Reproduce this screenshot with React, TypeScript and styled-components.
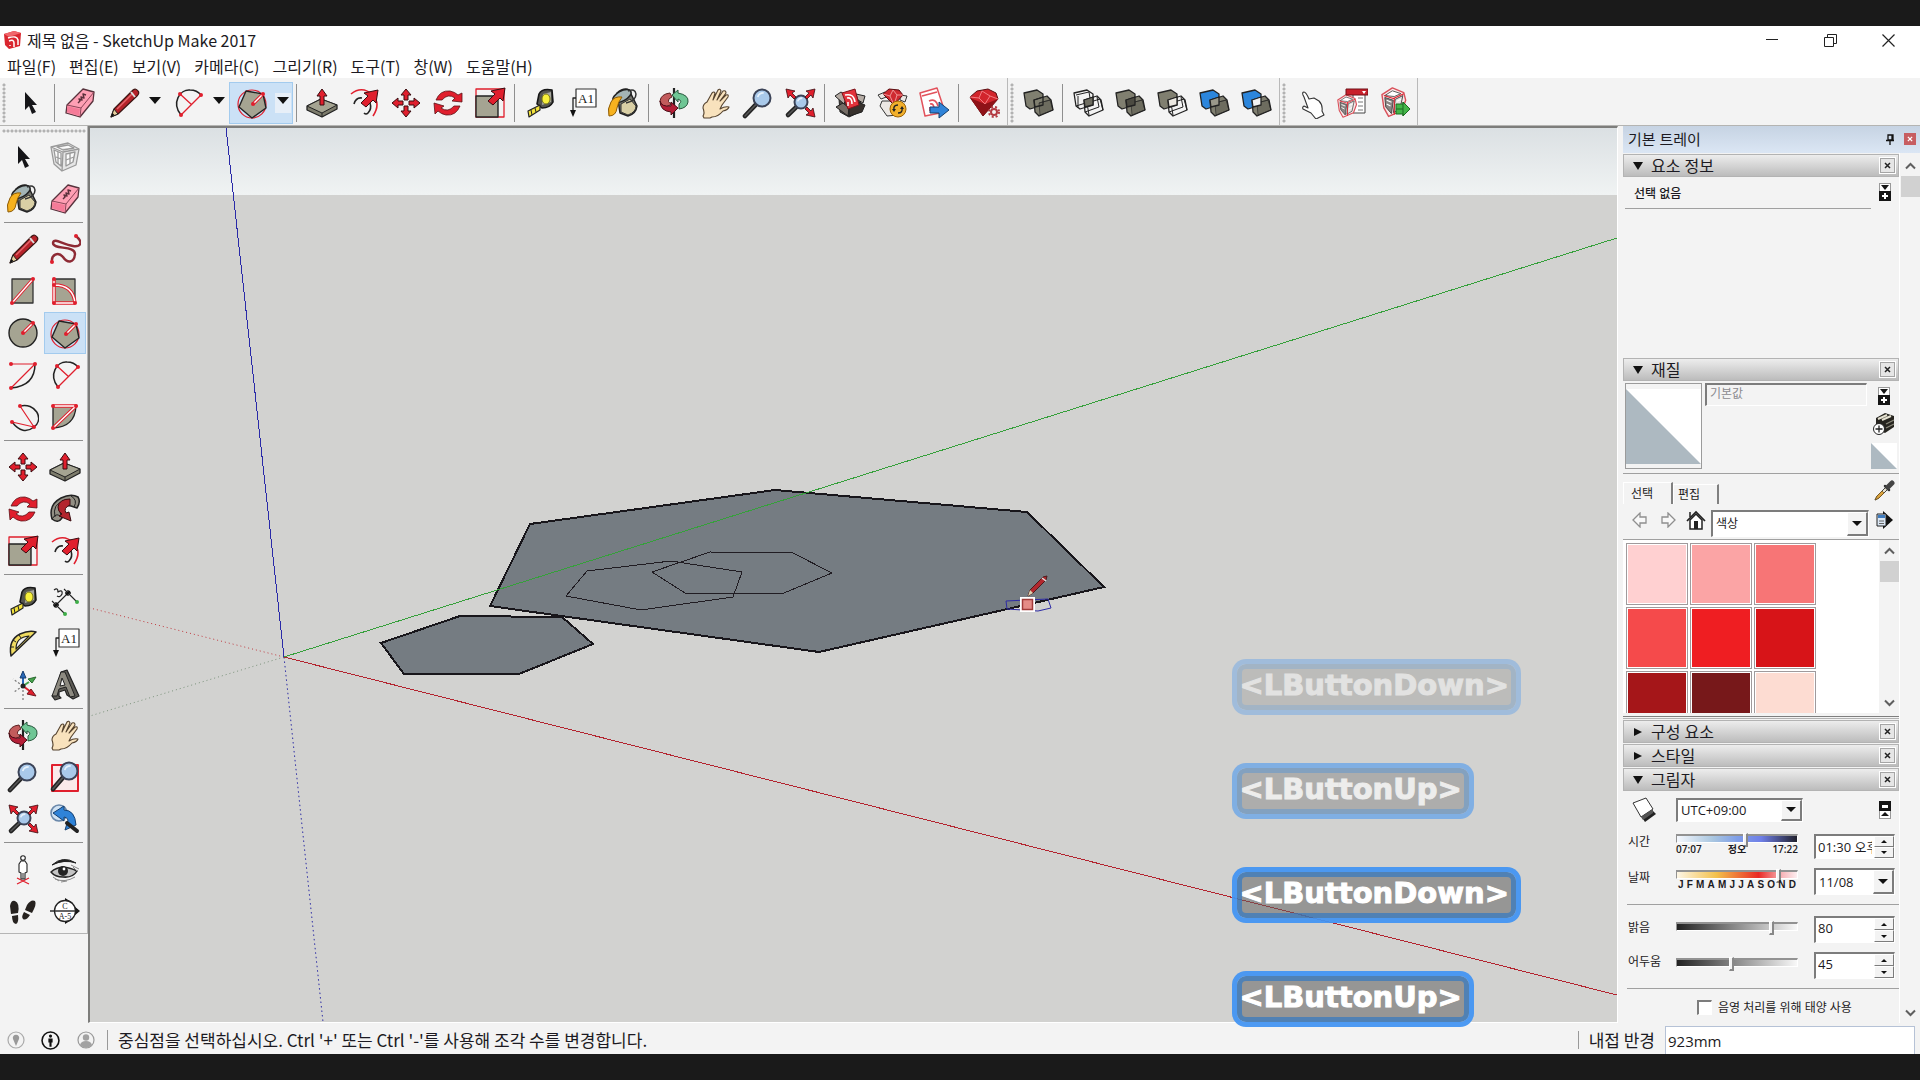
import React, { useState } from "react";
import styled, { createGlobalStyle, css } from "styled-components";

const uiFont = `"Open Sans", "Noto Sans CJK KR", sans-serif`;
const koFont = `"Noto Sans CJK KR", "Open Sans", sans-serif`;
const ink = "#1c1a22";
const face = "#f3f3f3";
const red = "#e01f2d";
const stone = "#a5a492";

const GlobalStyle = createGlobalStyle`
  * { box-sizing: border-box; }
  html, body { margin: 0; height: 100%; }
  #root { height: 100%; }
  button, input, select { font: inherit; color: inherit; margin: 0; }
`;

/* ---------- icons ---------- */

const Svg = ({ size = 32, children }: { size?: number; children: React.ReactNode }) => (
  <svg width={size} height={size} viewBox="0 0 32 32" fill="none" strokeLinejoin="round" aria-hidden="true">
    {children}
  </svg>
);

const Dots = ({ at }: { at: number[][] }) => (
  <>{at.map(([x, y]) => <circle key={`${x}-${y}`} cx={x} cy={y} r="2" fill={red} />)}</>
);

const Cased = ({ d }: { d: string }) => (
  <>
    <path d={d} stroke={red} strokeWidth="3.4" />
    <path d={d} stroke="#fff" strokeWidth="1.4" />
  </>
);

const Lens = ({ x = 20, y = 11, r = 8.5, hx = 3, hy = 29 }) => (
  <>
    <path d={`M${x - r * 0.7} ${y + r * 0.75}L${hx} ${hy}`} stroke="#222" strokeWidth="4.6" strokeLinecap="round" />
    <path d={`M${x - r * 0.7} ${y + r * 0.75}L${hx} ${hy}`} stroke="#555" strokeWidth="1.6" strokeLinecap="round" />
    <circle cx={x} cy={y} r={r} fill="#a9c9ea" stroke="#3b4357" strokeWidth="2" />
    <path d={`M${x - r * 0.5} ${y - r * 0.1}Q${x - r * 0.4} ${y - r * 0.6} ${x + r * 0.2} ${y - r * 0.6}`} stroke="#e6f1fb" strokeWidth="1.6" />
  </>
);

const diagArrow = "M31 1L29 14L26 11L19 18L14 14L21 7L17 4Z";
const cornerArrow = "M2 2L11 4L8 6L12 10L10 12L6 8L4 11Z";

const Solid = ({ a = "#807f70", b = "#807f70", mid = "none", wireA = false, wireB = false }) => (
  <>
    <path d="M2 6L15 3L21 7V18L8 22L4 19Z" fill={wireA ? "none" : a} stroke="#222" strokeWidth="1.3" />
    {wireA && <path d="M4 8L17 5M6 21V9M17 5L19 17M4 19L17 15L21 18" stroke="#222" />}
    <path d="M12 13L25 9L29 13L31 23L17 29L13 25Z" fill={wireB ? "none" : b} stroke="#222" strokeWidth="1.3" />
    {!wireB && <path d="M17 16L28 13M17 16L18 28L31 23L28 13Z" fill="#000" fillOpacity=".15" stroke="#222" strokeWidth=".6" />}
    {wireB && <path d="M15 16L28 12L31 23M15 16L17 28M13 25L27 20L25 10" stroke="#222" />}
    <path d="M12 13L21 10V18L13 20Z" fill={mid} stroke="#222" strokeWidth="1.3" />
  </>
);

const Box = () => (
  <>
    <path d="M5 12L13 17L27 11L26 25L15 30L6 25Z" fill="#4a443f" stroke="#222" />
    <path d="M1 9L7 5L13 9L10 17Z" fill="#b5aca5" stroke="#222" />
    <path d="M22 7L31 9L29 16L24 13Z" fill="#b5aca5" stroke="#222" />
    <path d="M2 20L9 16L15 21L14 29Z" fill="#756d66" stroke="#222" />
    <path d="M31 18L24 15L15 21L15 29L28 25Z" fill="#37312d" stroke="#222" />
  </>
);

const House = () => (
  <>
    <path d="M1 8L12 1L24 6L26 14L22 25L8 31L3 22Z" fill="#fbe9e9" stroke="#d9505a" strokeWidth="1.5" />
    <path d="M4 9L12 4L21 7L14 10Z" fill="#fff" stroke="#555" />
    <path d="M4 11L13 14L11 28L5 21Z" fill="#8a8583" stroke="#444" />
    <path d="M15 13L23 9L20 23L13 27Z" fill="#e6e2e0" stroke="#444" />
    <path d="M6 14L11 16M6 18L10 20M17 15L21 13M16 20L20 18" stroke="#fff" strokeWidth="1.2" />
    <path d="M14 11V29M3 9L13 12L24 7" stroke={red} strokeWidth="1.1" />
  </>
);

const icons: Record<string, React.ReactNode> = {
  select: <path d="M11 5V23L15 19L18 27L22 25L18 18H23Z" fill="#151518" />,
  component: (
    <g stroke="#9a9a9a" strokeWidth="1.3">
      <path d="M2 6L19 2L30 8L27 24L13 30L5 23Z" fill="#e6e6e6" />
      <path d="M2 6L14 11L30 8M14 11L13 30M5 9L12 12L12 25L7 21ZM17 13L26 11L24 21L17 25ZM8 6L19 4L25 7L14 9Z" fill="#fbfbfb" />
      <path d="M7 16L12 18M17 19L25 16M9 11V23M21 12V23" />
    </g>
  ),
  bucket: (
    <>
      <path d="M9 6Q16 0 21 3L29 19Q28 27 20 29L12 26Z" fill="#77776f" stroke="#222" strokeWidth="1.5" />
      <path d="M13 17L22 12L28 19Q28 25 20 28L13 25Z" fill="#d9cfa5" stroke="#333" />
      <ellipse cx="14" cy="9" rx="10" ry="5" transform="rotate(-28 14 9)" fill="#a3b4b5" stroke="#222" strokeWidth="1.5" />
      <path d="M20 4Q27 1 28 7Q28 14 18 16" stroke="#333" strokeWidth="1.5" />
      <path d="M14 10Q6 9 3 15Q-1 22 1 29Q8 29 9 21Q10 15 14 10Z" fill="#f7b21f" stroke="#8c5b08" />
    </>
  ),
  eraser: (
    <>
      <path d="M19 2L30 5L29 14L16 30L2 26L3 18Z" fill="#ff9fb4" stroke="#57323c" strokeWidth="1.3" />
      <path d="M3 18L17 21L30 5M17 21L16 30" stroke="#8d4659" />
      <path d="M3 19L16 22L15 29L3 25Z" fill="#f57b98" />
      <path d="M14 16L16 14L15 12L18 13L17 10L20 11L19 7L22 8" stroke="#5b2f3a" strokeWidth="1.4" />
    </>
  ),
  pencil: (
    <>
      <path d="M3 30L6 22L25 3Q28 1 30 4Q32 6 29 9L10 27Z" fill="#b52229" stroke="#3c1512" strokeWidth="1.2" />
      <path d="M3 30L6 22L10 27Z" fill="#e8cf9d" stroke="#222" />
      <path d="M3 30L4.500 26L6.500 28Z" fill="#111" />
      <path d="M9 22L25 6" stroke="#e5656a" strokeWidth="1.5" />
      <path d="M23 5L27 10" stroke="#ddd" strokeWidth="2" />
    </>
  ),
  freehand: (
    <>
      <path d="M27 3C35 10 31 14 24 13C14 12 5 4 4 10C4 17 26 12 26 21C25 31 18 30 14 24C9 18 2 22 3 29" stroke="#8e2a34" strokeWidth="2.400" />
      <Dots at={[[27, 3], [3, 29]]} />
    </>
  ),
  rectangle: (
    <>
      <path d="M5 4H26V28H5Z" fill={stone} stroke="#333" strokeWidth="1.3" />
      <Cased d="M5 28L26 4" />
      <Dots at={[[5, 28], [26, 4]]} />
    </>
  ),
  rotatedRect: (
    <>
      <path d="M5 4H26V28H5Z" fill={stone} stroke="#333" strokeWidth="1.3" />
      <Cased d="M5 4V28H26M5 10Q24 10 26 28" />
      <Dots at={[[5, 4], [5, 10], [5, 28], [26, 28]]} />
    </>
  ),
  circle: (
    <>
      <circle cx="16" cy="16" r="14" fill={stone} stroke="#222" strokeWidth="1.4" />
      <Cased d="M16 16L26 6" />
      <Dots at={[[16, 16], [26, 6]]} />
    </>
  ),
  polygon: (
    <>
      <circle cx="16" cy="17" r="14" stroke={red} strokeWidth="1.2" />
      <path d="M10 4L27 7L30 21L16 31L3 20Z" fill={stone} stroke="#222" strokeWidth="1.4" />
      <Cased d="M17 17L27 7" />
      <Dots at={[[17, 17], [27, 7]]} />
    </>
  ),
  arc: (
    <>
      <path d="M4 29Q28 27 28 5" stroke="#222" strokeWidth="1.5" />
      <path d="M4 5H28L4 29" stroke={red} strokeWidth="1.2" />
      <Dots at={[[4, 5], [28, 5], [4, 29]]} />
    </>
  ),
  arc2: (
    <>
      <path d="M9 28C-1 16 8 2 18 3Q25 3 29 8" stroke="#222" strokeWidth="1.5" />
      <path d="M8 7L20 18M29 8L9 28" stroke={red} strokeWidth="1.3" />
      <Dots at={[[8, 7], [29, 8], [9, 28]]} />
    </>
  ),
  arc3: (
    <>
      <path d="M13 5C28 1 38 18 27 26Q16 35 5 21" stroke="#222" strokeWidth="1.5" />
      <path d="M13 5L27 26L5 21" stroke={red} strokeWidth="1.2" />
      <Dots at={[[13, 5], [5, 21], [27, 26]]} />
    </>
  ),
  pie: (
    <>
      <path d="M4 5H27Q26 26 4 27Z" fill={stone} stroke="#222" strokeWidth="1.3" />
      <Cased d="M4 5H27L4 27" />
      <Dots at={[[4, 5], [27, 5], [4, 27]]} />
    </>
  ),
  move: (
    <g fill={red} stroke="#3a0c10" strokeWidth="1">
      {[0, 90, 180, 270].map((a) => (
        <path key={a} transform={`rotate(${a} 16 16)`} d="M16 2L21 8H18V13H14V8H11Z" />
      ))}
    </g>
  ),
  pushpull: (
    <>
      <path d="M1 19L15 12L31 18V22L16 30L1 23Z" fill="#7d7c6c" stroke="#222" strokeWidth="1.3" />
      <path d="M1 19L15 12L31 18L16 26Z" fill={stone} stroke="#222" />
      <path d="M16 26V30" stroke="#222" />
      <path d="M16 2L21 9H18V18H14V9H11Z" fill={red} stroke="#3a0c10" />
    </>
  ),
  rotate: (
    <g fill={red} stroke="#5c1217" strokeWidth=".8">
      <path d="M4 13Q8 3 18 4Q23 5 26 8L30 6V15L20 14L23 11Q16 6 10 13Z" />
      <path d="M28 19Q24 29 14 28Q9 27 6 24L3 27L2 16L12 19L9 21Q16 26 22 19Z" />
    </g>
  ),
  follow: (
    <>
      <path d="M3 26Q-1 12 12 5Q22 0 29 4Q32 9 28 15L22 13Q14 11 11 18L13 25Q9 31 3 26Z" fill="#928f84" stroke="#222" strokeWidth="1.5" />
      <path d="M6 24Q3 11 15 8M22 3Q29 7 25 14M3 26Q8 18 13 25" stroke="#222" />
      <path d="M21 6Q10 6 9 14Q9 19 13 21L10 23L22 28L20 19L17 20Q14 15 21 12Z" fill="#b3242d" stroke="#3a0c10" />
    </>
  ),
  scale: (
    <>
      <path d="M2 2H30V30H2Z" stroke={red} strokeWidth="1.3" />
      <path d="M2 9H24V30H2Z" fill={stone} stroke="#222" strokeWidth="1.4" />
      <path d={diagArrow} fill={red} stroke="#3a0c10" />
    </>
  ),
  offset: (
    <>
      <path d="M3 7Q14 -2 25 8Q33 17 25 29" stroke={red} strokeWidth="1.6" />
      <path d="M6 17Q8 10 14 11M22 16Q24 22 20 26Q18 28 16 26" stroke="#222" strokeWidth="1.6" />
      <path d={diagArrow} transform="translate(-1 2)" fill={red} stroke="#3a0c10" />
    </>
  ),
  tape: (
    <>
      <path d="M15 7Q18 1 28 3L29 15Q26 21 18 21L13 17Z" fill="#55554f" stroke="#161616" strokeWidth="1.6" />
      <path d="M19 7L27 5L27 15L18 18Z" fill="#a7a7a0" />
      <ellipse cx="22" cy="12" rx="4" ry="5" fill="#f8f03c" stroke="#7b7614" />
      <path d="M16 18L4 24L5 30L16 23Z" fill="#f2e23b" stroke="#222" strokeWidth="1.2" />
      <path d="M7 23L8 28M11 21L12 25" stroke="#222" />
    </>
  ),
  dimension: (
    <>
      <path d="M7 20L19 8M3 16L16 29M15 4L28 17" stroke="#222" strokeWidth="1.1" />
      <path d="M4 20H10M7 17V23M16 8H22M19 5V11M5 22L9 18M17 10L21 6" stroke="#111" strokeWidth="1.3" />
      <circle cx="16" cy="29" r="2" fill="#3fae49" />
      <circle cx="28" cy="17" r="2" fill="#3fae49" />
      <path d="M5 5Q9 2 9 7Q14 4 13 9Q11 13 8 11" stroke="#222" strokeWidth="1.3" />
    </>
  ),
  protractor: (
    <>
      <path d="M4 29Q1 13 13 7Q22 3 29 5Z" fill="#f0dc62" stroke="#222" strokeWidth="1.5" />
      <path d="M9 22Q9 10 22 9Z" fill={face} stroke="#222" strokeWidth="1.2" />
      <path d="M4 20L7 20M6 13L9 15M12 8L14 11" stroke="#222" />
    </>
  ),
  text: (
    <>
      <path d="M10 2H30V20H10Z" fill="#fff" stroke="#333" strokeWidth="1.2" />
      <path d="M10 11H7V24" stroke="#222" strokeWidth="1.3" />
      <path d="M4 23H10L7 30Z" fill="#111" />
      <text x="20" y="16" textAnchor="middle" fontSize="13" fontFamily="Liberation Serif, serif" fill="#222">A1</text>
    </>
  ),
  axes: (
    <>
      <path d="M16 17L6 10M16 17L7 23M16 17V31" stroke="#777" strokeWidth="1.2" strokeDasharray="2 2" />
      <path d="M16 17V8" stroke="#2767b8" strokeWidth="2" />
      <path d="M16 17L22 13" stroke="#46a34c" strokeWidth="2" />
      <path d="M16 17L24 23" stroke={red} strokeWidth="2" />
      <path d="M16 2L19 9H13Z" fill="#2767b8" stroke="#173e70" />
      <path d="M29 8L25 14L21 10Z" fill="#46a34c" stroke="#2a6930" />
      <path d="M29 27L20 25L24 20Z" fill={red} stroke="#701820" />
      <circle cx="16" cy="17" r="2.500" fill="#222" />
    </>
  ),
  text3d: (
    <>
      <path d="M12 3L18 1L30 27L24 30L18 26L16 21L10 23V27L12 29L6 31L3 27L7 25Z" fill="#5d5b55" stroke="#222" strokeWidth="1.2" />
      <path d="M12 3L16 3L26 27L21 28L17 18L10 20L8 27L3 27Z" fill="#8d8a80" stroke="#222" />
      <path d="M13 9L16 16L11 17Z" fill={face} stroke="#222" />
    </>
  ),
  orbit: (
    <>
      <path d="M16 1V31" stroke="#222" strokeWidth="2.200" />
      <path d="M12 6Q3 7 2 14Q2 18 8 20L14 17Q8 15 12 11L14 10Z" fill="#c25b5c" stroke="#5c1e1e" />
      <path d="M14 8L20 3V6Q31 8 30 15Q29 21 21 22V17Q25 14 20 12V15Z" fill="#6fc695" stroke="#27573c" />
      <path d="M2 14Q3 20 13 19V15L20 21L13 28V25Q2 24 2 14Z" fill="#b41f37" stroke="#4c0d17" />
    </>
  ),
  pan: (
    <path d="M3 29Q5 26 3 21Q3 17 7 15L12 6Q14 4 15 6L13 13L18 3Q20 1 21 4L17 13L23 4Q26 3 26 6L20 14L26 8Q29 7 28 10L22 18L20 22Q25 19 29 20Q28 23 23 24Q18 30 12 30L10 31H4Z" fill="#f8e2bd" stroke="#54422e" strokeWidth="1.100" />
  ),
  zoom: <Lens />,
  zoomWindow: (
    <>
      <path d="M3 4H29V30H3Z" fill="#fbeaea" stroke={red} strokeWidth="2" />
      <Lens x={20} y={10} r={8.5} hx={4} hy={28} />
    </>
  ),
  extents: (
    <>
      <Lens x={17} y={15} r={6.5} hx={4} hy={28} />
      <g fill={red} stroke="#3a0c10" strokeWidth=".8">
        <path d={cornerArrow} />
        <path transform="matrix(-1 0 0 1 33 0)" d={cornerArrow} />
        <path transform="rotate(180 16.500 16)" d={cornerArrow} />
      </g>
    </>
  ),
  previous: (
    <>
      <circle cx="10" cy="10" r="8" fill="#cfe2f3" stroke="#6a88aa" strokeWidth="1.6" />
      <path d="M4 10L15 3V7Q26 7 27 22L16 27L19 17Q18 14 15 14V18Z" fill="#2f83d8" stroke="#16406f" />
      <path d="M18 20L28 28" stroke="#222" strokeWidth="4" strokeLinecap="round" />
    </>
  ),
  camera: (
    <>
      <path d="M10 31L22 25M22 31L10 25" stroke={red} strokeWidth="1.3" />
      <circle cx="16" cy="5" r="2.300" fill="#fff" stroke="#222" strokeWidth="1.100" />
      <path d="M14 8H18L20 11L20 19L18 20V26H14V20L12 19L12 11Z" fill="#fff" stroke="#222" strokeWidth="1.1" />
      <path d="M16 20V26" stroke="#222" />
    </>
  ),
  eye: (
    <>
      <path d="M2 19Q12 10 28 18Q24 25 14 24Q6 24 2 19Z" fill="#c4c4c4" stroke="#222" strokeWidth="1.5" />
      <path d="M3 12Q14 2 27 10Q15 6 3 12Z" fill="#222" stroke="#222" />
      <circle cx="14" cy="18" r="5" fill="#222" />
      <circle cx="15" cy="16" r="1.400" fill="#fff" />
      <path d="M6 26Q16 30 26 24M22 12L30 16M12 29L18 28M24 14L29 19M4 24L10 28" stroke="#888" />
    </>
  ),
  feet: (
    <>
      <path d="M3 11Q4 5 8 6Q13 8 11 18L4 19Z" fill="#26221f" />
      <path d="M5 21L11 20Q12 28 9 29Q5 28 5 21Z" fill="#26221f" />
      <path d="M20 10Q24 4 28 6Q30 9 25 18L18 15Z" fill="#26221f" />
      <path d="M17 17L23 20Q19 26 16 24Q14 22 17 17Z" fill="#26221f" />
    </>
  ),
  section: (
    <>
      <path d="M16 3L24 8H16ZM16 29L24 24H16ZM25 11L31 16L25 21Z" fill="#111" />
      <circle cx="16" cy="16" r="10.500" fill="#fff" stroke="#222" strokeWidth="1.3" />
      <path d="M1 16H30" stroke="#222" strokeWidth="1.4" />
      <text x="16" y="14" textAnchor="middle" fontSize="8" fontFamily="Liberation Serif, serif" fill="#222">C</text>
      <text x="16" y="24" textAnchor="middle" fontSize="8" fontFamily="Liberation Serif, serif" fill="#222">A-5</text>
    </>
  ),
  warehouse: (
    <>
      <Box />
      <path d="M8 6L21 2L25 18L14 22Z" fill="#e2323b" stroke="#7d1219" />
      <path d="M11 8Q20 6 21 15M13 11Q18 10 18 17M14 15V19" stroke="#fff" strokeWidth="1.5" />
    </>
  ),
  extension: (
    <>
      <path d="M5 12L2 8L9 5L13 9ZM24 8L31 9L29 15L24 13ZM4 19L11 29L22 28V14H6Z" fill="#ece8e4" stroke="#333" />
      <path d="M7 7L13 2L23 3L27 8L18 18Z" fill="#cf2a30" stroke="#5a0d11" />
      <path d="M7 7L14 9L18 18L21 8L27 8M14 9L17 3L21 8" stroke="#f2a0a2" strokeWidth=".9" />
      <circle cx="22" cy="22" r="8" fill="#f2b02c" stroke="#9a6204" />
      <path d="M18 23Q17 18 22 18M26 21Q27 26 22 26" stroke="#222" strokeWidth="1.4" />
      <path d="M16 22H20L18 25ZM24 22H28L26 19Z" fill="#222" />
    </>
  ),
  layout: (
    <>
      <path d="M2 6L19 1L27 25L7 29Z" fill="#fff" stroke="#e2525c" strokeWidth="1.5" />
      <path d="M4 9L19 5M11 14Q18 11 20 19M12 17Q16 16 16 22M12 20V24" stroke="#e2525c" strokeWidth="1.7" />
      <path d="M12 20H21V15L31 23L21 31V26H12Z" fill="#2f83d8" stroke="#163f6d" />
    </>
  ),
  ruby: (
    <>
      <path d="M2 10L9 4L20 2L28 6L30 12L15 29Z" fill="#d2252c" stroke="#5a0d11" />
      <path d="M2 11L15 29L30 12L17 17Z" fill="#8f1218" />
      <path d="M2 10L11 11L17 17L22 9L30 12M11 11L14 4L22 9" stroke="#f27b80" />
      <circle cx="26" cy="25" r="3" fill={face} stroke="#b33a42" strokeWidth="2" />
      <circle cx="26" cy="25" r="5" stroke="#b33a42" strokeWidth="2" strokeDasharray="2 2" />
    </>
  ),
  outerShell: <Solid />,
  intersect: <Solid wireA wireB mid="#6f6e62" />,
  union: <Solid mid="#4c4b42" />,
  subtract: <Solid wireB mid="#ece9e2" />,
  trim: <Solid a="#2c86dc" mid="#9a988a" />,
  split: <Solid a="#2c86dc" mid="#f3f3f3" />,
  pointer: (
    <path d="M9 8Q8 5 10 5Q12 5 15 12L20 11L25 14Q29 18 28 24L30 28L22 32L17 26L9 22Q8 20 10 19L14 21L10 10Z" fill="#fff" stroke="#333" strokeWidth="1.1" />
  ),
  houseList: (
    <>
      <path d="M17 6H29V26H17Z" fill="#fff" stroke="#444" />
      <path d="M22 11H27M22 15H27M22 19H27M22 23H27" stroke="#777" />
      <g transform="translate(1 7) scale(.75)"><House /></g>
      <path d="M10 2H32V8H10Z" fill="#c9202b" stroke="#6e1018" />
      <path d="M26 4H30L28 7Z" fill="#fff" />
    </>
  ),
  houseGo: (
    <>
      <g transform="translate(3 0) scale(.95)"><House /></g>
      <path d="M18 17H25V15L32 22L25 29V27H18Z" fill="#43b649" stroke="#1d6a22" />
      <path d="M18 22H25M25 15V29" stroke="#1d6a22" />
    </>
  ),
};

/* ---------- window frame ---------- */

const Screen = styled.div`
  display: flex;
  flex-direction: column;
  height: 100vh;
  min-height: 720px;
  padding: 26px 0;
  overflow: hidden;
  background: #1a1a1a;
  color: ${ink};
  font: 15px/20px ${uiFont};
`;

const AppWindow = styled.div`
  flex: 1;
  min-height: 0;
  display: flex;
  flex-direction: column;
  background: ${face};
`;

const TitleBar = styled.header`
  display: flex;
  align-items: center;
  height: 28px;
  padding: 0 3px;
  background: #fff;
`;

const Title = styled.h1`
  flex: 1;
  margin: 0;
  padding-left: 4px;
  font: 400 16px/20px ${koFont};
`;

const WindowButton = styled.button`
  width: 58px;
  height: 28px;
  border: 0;
  padding: 0;
  background: none;
  display: grid;
  place-items: center;
`;

const MenuBar = styled.nav`
  display: flex;
  height: 24px;
  background: #fff;
`;

const MenuItem = styled.button`
  border: 0;
  padding: 0 6px 0 7px;
  background: none;
  font: 16px/24px ${koFont};
`;

const Toolbar = styled.div`
  display: flex;
  height: 48px;
  border-bottom: 1px solid #b4b4b2;
`;

const ToolGroup = styled.div`
  display: flex;
  align-items: center;
  padding: 2px 2px 0 0;
  border-right: 1px solid #b9b9b9;
`;

const Grip = styled.span`
  width: 9px;
  height: 40px;
  background: radial-gradient(circle at 4px 2px, #b2b2b2 1px, transparent 2px) 0 0 / 9px 4px;
`;

const ToolButton = styled.button<{ $active?: boolean; $wide?: boolean }>`
  display: grid;
  place-items: center;
  width: ${(p) => (p.$wide ? 46 : 42)}px;
  height: 42px;
  padding: 0;
  border: 1px solid ${(p) => (p.$active ? "#a3cbee" : "transparent")};
  background: ${(p) => (p.$active ? "#cbe1f6" : "none")};
`;

const SplitTool = styled.span<{ $active?: boolean }>`
  display: flex;
  width: 64px;
  height: 42px;
  outline: ${(p) => (p.$active ? "1px solid #a3cbee" : "none")};
  outline-offset: -1px;
  background: ${(p) => (p.$active ? "#cbe1f6" : "none")};
`;

const DropArrow = styled.button<{ $active?: boolean }>`
  width: 16px;
  height: 20px;
  align-self: center;
  padding: 0 0 4px;
  border: 0;
  display: grid;
  place-items: center;
  background: ${(p) => (p.$active ? "#e7eff8" : "none")};
`;

const Triangle = styled.span<{ $dir?: "up" | "down" | "right"; $size?: number; $depth?: number }>`
  width: 0;
  height: 0;
  border: ${(p) => p.$size ?? 5}px solid transparent;
  ${(p) =>
    p.$dir === "up"
      ? css`border-bottom: ${p.$depth ?? p.$size ?? 5}px solid #111; border-top-width: 0;`
      : p.$dir === "right"
      ? css`border-left: ${p.$depth ?? 8}px solid #111; border-right-width: 0;`
      : css`border-top: ${p.$depth ?? p.$size ?? 5}px solid #111; border-bottom-width: 0;`}
`;

const ToolDivider = styled.hr`
  width: 1px;
  height: 38px;
  margin: 0 4px 0 3px;
  border: 0;
  background: #8f8f8f;
`;

/* ---------- workspace ---------- */

const Workspace = styled.main`
  flex: 1;
  min-height: 0;
  display: grid;
  grid-template-columns: 88px minmax(0, 1fr) 302px;
`;

const Palette = styled.aside`
  align-self: start;
  padding: 0 1px 1px 2px;
  border-right: 1px solid #b5b5b5;
  border-bottom: 1px solid #b5b5b5;
`;

const PaletteGrip = styled.div`
  height: 10px;
  background: radial-gradient(circle at 2px 5px, #b2b2b2 1px, transparent 2px) 0 0 / 4px 10px;
`;

const PaletteGroup = styled.div`
  display: grid;
  grid-template-columns: 42px 42px;
`;

const PaletteRule = styled.hr`
  height: 1px;
  margin: 2px 3px 5px 2px;
  border: 0;
  background: #8f8f8f;
`;

const Viewport = styled.section`
  position: relative;
  border: solid;
  border-width: 2px 1px 1px 2px;
  border-color: #7d7d7b #fff #fff #7d7d7b;
  background: #d2d2d0;
`;

const Scene = styled.svg`
  display: block;
  width: 100%;
  height: 100%;
  position: absolute;
  inset: 0;
`;

const KeyStack = styled.div`
  position: absolute;
  right: 96px;
  bottom: -5px;
  z-index: 2;
  display: flex;
  flex-direction: column;
  align-items: flex-start;
  gap: 48px;
`;

const KeyBadge = styled.span<{ $fade: number }>`
  height: 56px;
  padding: 0 7px 0 2px;
  border: 5px solid rgba(66, 148, 242, 0.94);
  border-radius: 14px;
  background: rgba(96, 96, 96, 0.52) padding-box;
  box-shadow: inset 0 0 0 5px rgba(56, 122, 190, 0.75);
  opacity: ${(p) => p.$fade};
  color: #fff;
  font: 700 29px/42px "DejaVu Sans", sans-serif;
  -webkit-text-stroke: 1px #fff;
`;

/* ---------- tray ---------- */

const Tray = styled.aside`
  min-height: 0;
  margin-left: 5px;
  display: flex;
  flex-direction: column;
  font-size: 12px;
  line-height: 16px;
`;

const TrayTitle = styled.div`
  display: flex;
  align-items: center;
  gap: 8px;
  flex: none;
  height: 27px;
  padding: 0 4px 1px 5px;
  background: linear-gradient(#c6d3e3, #dbe6f4);
  h2 {
    flex: 1;
    margin: 0;
    font-size: 15px;
    font-weight: 400;
  }
`;

const PinButton = styled.button`
  border: 0;
  padding: 0;
  width: 12px;
  height: 12px;
  background: none;
  display: grid;
`;

const TrayClose = styled(PinButton)`
  background: #c75d61;
  place-items: center;
`;

const TrayBody = styled.div`
  flex: 1;
  min-height: 0;
  display: grid;
  grid-template-columns: minmax(0, 1fr) 20px;
  overflow: hidden;
`;

const Sections = styled.div`
  min-height: 0;
  padding-top: 1px;
  border-right: 1px solid #fff;
  overflow: hidden;
`;

const SectionHead = styled.div`
  display: flex;
  align-items: center;
  gap: 8px;
  height: 23px;
  margin-bottom: 1px;
  padding: 0 2px 0 9px;
  border: 1px solid #b3b3b3;
  background: linear-gradient(#ededed, #bcbcbc);
  h3 {
    flex: 1;
    margin: 0;
    font-size: 16px;
    line-height: 20px;
    font-weight: 400;
  }
`;

const CaretBox = styled.span`
  width: 10px;
  display: grid;
  place-items: center;
`;

const HeadClose = styled.button`
  width: 17px;
  height: 17px;
  padding: 0;
  border: 1px solid #fff;
  outline: 1px solid #a5a5a5;
  outline-offset: -2px;
  background: #e6e6e6;
  display: grid;
  place-items: center;
`;

const InfoBody = styled.div`
  display: flex;
  justify-content: space-between;
  align-items: flex-start;
  height: 180px;
  padding: 5px 8px 0 2px;
`;

const InfoText = styled.p`
  width: 246px;
  height: 26px;
  margin: 0;
  padding: 3px 9px;
  border-bottom: 1px solid #a0a0a0;
  font-weight: 500;
`;

const ToggleButton = styled.button`
  width: 12px;
  height: 18px;
  padding: 0;
  border: 0;
  background: none;
  display: grid;
`;

const MaterialTop = styled.div`
  display: grid;
  grid-template-columns: 77px 162px 1fr;
  column-gap: 3px;
  height: 92px;
  padding: 1px 2px 4px 2px;
  border-bottom: 1px solid #a0a0a0;
`;

const Preview = styled.div`
  height: 86px;
  padding-top: 5px;
  border: 1px solid #9b9b9b;
  svg { display: block; }
`;

const sunken = css`
  border: solid;
  border-width: 2px 1px 1px 2px;
  border-color: #7c7c7c #fff #fff #7c7c7c;
`;

const NameField = styled.input`
  ${sunken}
  width: 100%;
  height: 23px;
  padding: 0 3px 3px;
  background: ${face};
  &::placeholder { color: #8b8b90; opacity: 1; }
`;

const SideIcons = styled.div`
  justify-self: end;
  width: 26px;
  display: flex;
  flex-direction: column;
  align-items: center;
  justify-content: space-between;
  padding-top: 4px;
`;

const IconButton = styled.button<{ $w?: number }>`
  width: ${(p) => p.$w ?? 24}px;
  height: 26px;
  padding: 0;
  border: 0;
  background: none;
  display: grid;
  place-items: center;
`;

const TabRow = styled.div`
  display: flex;
  align-items: flex-end;
  height: 30px;
  padding-right: 3px;
  ${IconButton} { margin-left: auto; }
`;

const Tab = styled.button<{ $active?: boolean }>`
  width: ${(p) => (p.$active ? 50 : 46)}px;
  height: ${(p) => (p.$active ? 22 : 20)}px;
  padding: 0 0 0 ${(p) => (p.$active ? 7 : 4)}px;
  border: solid;
  border-width: 1px 2px 0 1px;
  border-color: #fff #808080 #fff #fff;
  background: ${face};
  text-align: left;
  font-size: 12px;
`;

const SelectFrame = styled.span<{ $w: number; $h: number }>`
  ${sunken}
  display: grid;
  width: ${(p) => p.$w}px;
  height: ${(p) => p.$h}px;
  background: #fff;
  > * { grid-area: 1 / 1; }
  select {
    width: 100%;
    min-width: 0;
    height: ${(p) => p.$h - 3}px;
    appearance: none;
    border: 0;
    padding: 0 22px 0 3px;
    background: none;
  }
`;

const NavRow = styled.div`
  display: flex;
  align-items: flex-start;
  gap: 1px;
  height: 36px;
  padding: 3px 2px 0 3px;
  border-bottom: 1px solid #a0a0a0;
  ${SelectFrame} { margin: 3px auto 0 0; }
`;

const SelectArrow = styled.span`
  justify-self: end;
  width: 21px;
  display: grid;
  place-items: center;
  border: solid;
  border-width: 1px 2px 2px 1px;
  border-color: #fff #7c7c7c #7c7c7c #fff;
  background: ${face};
  pointer-events: none;
`;

const SwatchPane = styled.div`
  display: grid;
  grid-template-columns: minmax(0, 1fr) 20px;
  height: 173px;
  overflow: hidden;
  background: #fff;
`;

const Swatches = styled.div`
  display: grid;
  grid-template-columns: repeat(3, 62px);
  grid-auto-rows: 62px;
  gap: 2px;
  padding: 3px;
  overflow: hidden;
`;

const Swatch = styled.button<{ $color: string }>`
  padding: 1px;
  border: 1px solid #a09a9c;
  background: ${(p) => p.$color} content-box;
`;

const ScrollTrack = styled.div`
  display: flex;
  flex-direction: column;
  align-items: center;
  background: ${face};
`;

const ScrollButton = styled.button`
  width: 19px;
  height: 21px;
  padding: 0;
  border: 0;
  background: none;
  display: grid;
  place-items: center;
`;

const ScrollThumb = styled.span`
  width: 19px;
  height: 21px;
  margin-bottom: auto;
  background: #d1d1d1;
`;

const TrayScroll = styled(ScrollTrack)`
  padding-top: 2px;
`;

const PaneEnd = styled.hr`
  height: 3px;
  margin: 3px 0 1px;
  border: solid #7f7f7f;
  border-width: 1px 0 0;
  border-bottom: 1px solid #b3b3b3;
`;

const ZoneRow = styled.div`
  display: flex;
  align-items: center;
  height: 36px;
  padding: 0 8px 1px 9px;
  ${ToggleButton} { margin-left: auto; }
  ${SelectFrame} { margin-left: 19px; font-size: 13px; }
`;

const ShadowRow = styled.div<{ $h: number; $top: number }>`
  display: grid;
  grid-template-columns: 48px 122px 81px;
  align-items: start;
  height: ${(p) => p.$h}px;
  padding: ${(p) => p.$top}px 0 0 5px;
  > :last-child { margin-left: 16px; font-size: 13px; }
`;

const RowLabel = styled.label<{ $drop?: number }>`
  padding-top: ${(p) => p.$drop ?? 0}px;
`;

const Range = styled.input<{ $track: string; $drop?: number }>`
  appearance: none;
  display: block;
  width: 122px;
  height: 9px;
  margin: ${(p) => p.$drop ?? 0}px 0 1px;
  background: none;
  &::-webkit-slider-runnable-track {
    height: 9px;
    border: solid;
    border-width: 2px 1px 1px 1px;
    border-color: #929292 #fff #fff #929292;
    background: ${(p) => p.$track};
  }
  &::-webkit-slider-thumb {
    appearance: none;
    width: 5px;
    height: 14px;
    margin-top: -3px;
    border: solid;
    border-width: 1px 2px 2px 1px;
    border-color: #fff #888 #888 #fff;
    background: ${face};
  }
`;

const Ticks = styled.div`
  display: flex;
  justify-content: space-between;
  height: 10px;
  font: 600 10px/10px ${uiFont};
`;

const Months = styled(Ticks)`
  padding: 0 2px;
  font: 700 10px/10px "Liberation Sans", sans-serif;
`;

const SpinFrame = styled.span<{ $h: number }>`
  ${sunken}
  display: grid;
  grid-template-columns: minmax(0, 1fr) 20px;
  width: 81px;
  height: ${(p) => p.$h}px;
  background: #fff;
  input {
    width: 100%;
    min-width: 0;
    height: 20px;
    padding: 0 2px;
    border: 0;
    background: none;
  }
`;

const SpinButtons = styled.span`
  display: grid;
  grid-template-rows: 1fr 1fr;
  button {
    display: grid;
    place-items: center;
    min-height: 0;
    padding: 0;
    border: 1px solid;
    border-color: #fff #7c7c7c #7c7c7c #fff;
    background: ${face};
  }
`;

const Rule = styled.hr`
  height: 1px;
  margin: 0 0 0 4px;
  border: 0;
  background: #a0a0a0;
`;

const SunRow = styled.label`
  display: flex;
  align-items: center;
  gap: 6px;
  height: 37px;
  padding-left: 74px;
  input {
    ${sunken}
    appearance: none;
    width: 15px;
    height: 15px;
    background: #fff;
  }
`;

/* ---------- status bar ---------- */

const StatusBar = styled.footer`
  display: flex;
  align-items: center;
  height: 31px;
  padding: 3px 5px 0 5px;
`;

const StatusIcons = styled.div`
  display: flex;
  gap: 14px;
  padding-right: 11px;
  border-right: 1px solid #999;
  button {
    width: 21px;
    height: 20px;
    padding: 0;
    border: 0;
    background: none;
    display: grid;
    place-items: center;
  }
`;

const Hint = styled.p`
  flex: 1;
  margin: 0;
  padding-left: 10px;
  font: 17px/20px ${koFont};
`;

const Measure = styled.label`
  display: flex;
  align-items: center;
  gap: 10px;
  height: 28px;
  span {
    padding-left: 10px;
    border-left: 1px solid #999;
    font: 17px/18px ${koFont};
  }
  input {
    width: 250px;
    height: 28px;
    padding: 0 2px;
    border: 1px solid #b6c2d6;
    border-bottom: 0;
    background: #fff;
  }
`;

/* ---------- pieces ---------- */

const ToolIcon = ({ name }: { name: string }) => <Svg>{icons[name]}</Svg>;

const Tools = ({ list }: { list: string[] }) => (
  <>
    {list.map((t, i) =>
      t === "|" ? (
        <ToolDivider key={i} />
      ) : t.startsWith("+") ? (
        <SplitTool key={i} $active={t === "+polygon"}>
          <ToolButton $wide aria-label={t.slice(1)}><ToolIcon name={t.slice(1)} /></ToolButton>
          <DropArrow $active={t === "+polygon"} aria-label={`${t.slice(1)} menu`}><Triangle $size={6} $depth={7} /></DropArrow>
        </SplitTool>
      ) : (
        <ToolButton key={i} aria-label={t}><ToolIcon name={t} /></ToolButton>
      )
    )}
  </>
);

const toolGroups: string[][] = [
  ["select", "|", "eraser", "+pencil", "+arc2", "+polygon", "|", "pushpull", "offset", "move", "rotate", "scale", "|",
    "tape", "text", "bucket", "|", "orbit", "pan", "zoom", "extents", "|", "warehouse", "extension", "layout", "|", "ruby"],
  ["outerShell", "|", "intersect", "union", "subtract", "trim", "split"],
  ["pointer", "houseList", "houseGo"],
];

const paletteGroups: string[][] = [
  ["select", "component", "bucket", "eraser"],
  ["pencil", "freehand", "rectangle", "rotatedRect", "circle", "polygon", "arc", "arc2", "arc3", "pie"],
  ["move", "pushpull", "rotate", "follow", "scale", "offset"],
  ["tape", "dimension", "protractor", "text", "axes", "text3d"],
  ["orbit", "pan", "zoom", "zoomWindow", "extents", "previous"],
  ["camera", "eye", "feet", "section"],
];

const menus = ["파일(F)", "편집(E)", "보기(V)", "카메라(C)", "그리기(R)", "도구(T)", "창(W)", "도움말(H)"];

const swatchColors = ["#ffd0d1", "#fba4a5", "#f77576", "#f54a4b", "#ef1e22", "#d71418", "#a51619", "#77181a", "#fddcd2"];

const keys: [string, number][] = [
  ["<LButtonDown>", 0.36],
  ["<LButtonUp>", 0.6],
  ["<LButtonDown>", 1],
  ["<LButtonUp>", 1],
];

const Chevron = ({ up }: { up?: boolean }) => (
  <svg width="11" height="8" viewBox="0 0 11 8" fill="none" aria-hidden="true">
    <path d={up ? "M1 6.500L5.500 2L10 6.500" : "M1 1.500L5.500 6L10 1.500"} stroke="#5f5f5f" strokeWidth="2" />
  </svg>
);

const Cross = ({ color = "#222", size = 7 }) => (
  <svg width={size} height={size} viewBox="0 0 7 7" aria-hidden="true">
    <path d="M1 1L6 6M6 1L1 6" stroke={color} strokeWidth="1.500" />
  </svg>
);

const Expand = ({ open }: { open?: boolean }) => (
  <ToggleButton aria-label="details">
    <svg width="12" height="18" viewBox="0 0 12 18" aria-hidden="true">
      <rect x=".5" y=".5" width="11" height="17" fill="#fff" stroke="#999" />
      {open ? (
        <>
          <path d="M0 0H12V10H0Z" fill="#151515" />
          <path d="M3 4H9V7H3Z" fill="#fff" />
          <path d="M6 11L10 15H2Z" fill="#151515" />
        </>
      ) : (
        <>
          <path d="M0 8H12V18H0Z" fill="#151515" />
          <path d="M6 10V16M3 13H9" stroke="#fff" strokeWidth="2" />
          <path d="M6 7L10 2H2Z" fill="#151515" />
        </>
      )}
    </svg>
  </ToggleButton>
);

const Head = ({ title, open }: { title: string; open?: boolean }) => (
  <SectionHead>
    <CaretBox><Triangle $dir={open ? "down" : "right"} $size={open ? 5 : 4} $depth={8} /></CaretBox>
    <h3>{title}</h3>
    <HeadClose aria-label={`${title} close`}><Cross /></HeadClose>
  </SectionHead>
);

const MatSwatch = ({ w, h }: { w: number; h: number }) => (
  <svg width={w} height={h} viewBox="0 0 75 75" preserveAspectRatio="none" aria-hidden="true">
    <path d="M0 0H75V75H0Z" fill="#fff" />
    <path d="M0 0V75H75Z" fill="#adb9c1" />
  </svg>
);

const Picker = ({ label, value, w, h }: { label: string; value: string; w: number; h: number }) => (
  <SelectFrame $w={w} $h={h}>
    <select aria-label={label} defaultValue={value}><option>{value}</option></select>
    <SelectArrow><Triangle /></SelectArrow>
  </SelectFrame>
);

const Spinner = ({ value, h, label }: { value: string | number; h: number; label: string }) => (
  <SpinFrame $h={h}>
    <input type="text" aria-label={label} value={value} readOnly />
    <SpinButtons>
      <button aria-label={`${label} +`}><Triangle $dir="up" $size={3} /></button>
      <button aria-label={`${label} -`}><Triangle $size={3} /></button>
    </SpinButtons>
  </SpinFrame>
);

const SceneDrawing = () => (
  <Scene viewBox="90 128 1527 894" preserveAspectRatio="xMinYMin slice" fill="none" aria-label="model">
    <defs>
      <linearGradient id="sky" x1="0" y1="0" x2="0" y2="1">
        <stop offset="0" stopColor="#dbe0e3" />
        <stop offset="1" stopColor="#f0f3f3" />
      </linearGradient>
    </defs>
    <rect x="90" y="128" width="1527" height="67" fill="url(#sky)" />
    <rect x="90" y="195" width="1527" height="827" fill="#d2d2d0" />
    <path d="M284 657L90 608" stroke="#c03a40" strokeDasharray="1 3" />
    <path d="M284 657L90 716" stroke="#7b927b" strokeDasharray="1 3" />
    <path d="M284 657L323 1022" stroke="#2c2ca5" strokeDasharray="1.500 3" />
    <g shapeRendering="crispEdges">
      <path d="M284 657L226 128" stroke="#2a2aa8" />
      <path d="M284 657L1617 995" stroke="#b3242f" />
      <path d="M530 524L775 490L1027 512L1104 587L819 652L490 606Z" fill="#757c82" stroke="#18161b" strokeWidth="2" />
      <path d="M381 643L460 616L562 617L593 644L519 674H404Z" fill="#757c82" stroke="#18161b" strokeWidth="2" />
      <path d="M587 571L671 561L742 572L733 597L641 610L566 596ZM652 572L710 552L793 553L832 573L784 593H685Z" stroke="#201c22" />
      <path d="M284 657L1617 238" stroke="#35a03a" />
    </g>
    <path d="M1006 601L1048 599L1051 608L1038 611L1007 609Z" stroke="#2d2ba5" />
    <rect x="1021" y="598" width="13" height="13" fill="#e58c86" stroke="#fff" strokeWidth="2" />
    <rect x="1022.500" y="599.500" width="10" height="10" stroke="#a23b38" strokeWidth="1.500" />
    <path d="M1028 596L1030 590L1043 577L1047 576L1046 580L1033 593Z" fill="#b2282e" stroke="#4b1c1d" />
    <path d="M1028 596L1030 590L1033 593Z" fill="#dcd2b0" />
    <path d="M1042 578L1046 581" stroke="#ddd" strokeWidth="1.500" />
  </Scene>
);

export default function App() {
  const [time, setTime] = useState(57);
  const [date, setDate] = useState(86);
  const [light, setLight] = useState(80);
  const [dark, setDark] = useState(45);

  return (
    <Screen>
      <GlobalStyle />
      <AppWindow>
        <TitleBar>
          <svg width="20" height="20" viewBox="0 0 20 20" fill="none" aria-hidden="true">
            <path d="M1 4L11 1L18 3L17 16L6 19L2 15Z" fill="#d9262f" />
            <path d="M1 4L11 1L18 3L6 7Z" fill="#f0666b" />
            <path d="M5 8Q14 5 15 10V15M6 11Q11 9 11 13V17M7 15V16" stroke="#fff" strokeWidth="1.500" />
          </svg>
          <Title>제목 없음 - SketchUp Make 2017</Title>
          <WindowButton aria-label="minimize">
            <svg width="12" height="12" viewBox="0 0 12 12"><path d="M0 5.500H12" stroke="#222" /></svg>
          </WindowButton>
          <WindowButton aria-label="restore">
            <svg width="13" height="13" viewBox="0 0 13 13" fill="none"><path d="M.5 3.500H9.500V12.500H.5ZM3.500 3.500V.5H12.500V9.500H9.500" stroke="#222" /></svg>
          </WindowButton>
          <WindowButton aria-label="close">
            <svg width="13" height="13" viewBox="0 0 13 13"><path d="M.5 .5L12.500 12.500M12.500 .5L.5 12.500" stroke="#222" strokeWidth="1.200" /></svg>
          </WindowButton>
        </TitleBar>
        <MenuBar>
          {menus.map((m) => <MenuItem key={m}>{m}</MenuItem>)}
        </MenuBar>
        <Toolbar>
          {toolGroups.map((g, i) => (
            <ToolGroup key={i}><Grip /><Tools list={g} /></ToolGroup>
          ))}
        </Toolbar>
        <Workspace>
          <Palette>
            <PaletteGrip />
            {paletteGroups.map((g, i) => (
              <React.Fragment key={i}>
                {i > 0 && <PaletteRule />}
                <PaletteGroup>
                  {g.map((t) => (
                    <ToolButton key={t} $active={t === "polygon"} aria-label={t}><ToolIcon name={t} /></ToolButton>
                  ))}
                </PaletteGroup>
              </React.Fragment>
            ))}
          </Palette>
          <Viewport>
            <SceneDrawing />
            <KeyStack>
              {keys.map(([k, fade], i) => <KeyBadge key={i} $fade={fade}>{k}</KeyBadge>)}
            </KeyStack>
          </Viewport>
          <Tray>
            <TrayTitle>
              <h2>기본 트레이</h2>
              <PinButton aria-label="pin">
                <svg width="12" height="12" viewBox="0 0 12 12" fill="none"><path d="M4 2H9V7H4ZM2 7.500H10M6 8V12M8 2V7" stroke="#111" strokeWidth="1.300" /></svg>
              </PinButton>
              <TrayClose aria-label="tray close"><Cross color="#fff" size={6} /></TrayClose>
            </TrayTitle>
            <TrayBody>
              <Sections>
                <Head title="요소 정보" open />
                <InfoBody>
                  <InfoText>선택 없음</InfoText>
                  <Expand />
                </InfoBody>
                <Head title="재질" open />
                <MaterialTop>
                  <Preview><MatSwatch w={75} h={75} /></Preview>
                  <NameField aria-label="material name" placeholder="기본값" />
                  <SideIcons>
                    <Expand />
                    <IconButton aria-label="new material">
                      <svg width="22" height="24" viewBox="0 0 22 24" fill="none">
                        <path d="M3 6L12 1L21 4V15L12 21L3 17Z" fill="#26241f" />
                        <path d="M5 7L14 3M9 8L18 4" stroke="#e4e1d0" strokeWidth="2" />
                        <path d="M13 12L21 8M13 16L21 12" stroke="#8b897c" strokeWidth="1.300" />
                        <circle cx="6" cy="17" r="5.500" fill="#fff" stroke="#222" />
                        <path d="M6 13.500V20.500M2.500 17H9.500" stroke="#222" strokeWidth="1.300" />
                      </svg>
                    </IconButton>
                    <MatSwatch w={26} h={26} />
                  </SideIcons>
                </MaterialTop>
                <TabRow role="tablist">
                  <Tab $active role="tab">선택</Tab>
                  <Tab role="tab">편집</Tab>
                  <IconButton aria-label="sample">
                    <svg width="22" height="22" viewBox="0 0 22 22" fill="none">
                      <path d="M2 20L4 16L13 7L15 9L6 18Z" fill="#e8e2cd" stroke="#444" />
                      <path d="M2 20L4 16L9 11L11 13L6 18Z" fill="#dba23c" stroke="#6b4d16" strokeWidth=".7" />
                      <path d="M12 6L16 10" stroke="#333" strokeWidth="2.500" strokeLinecap="round" />
                      <path d="M15 7L19 3" stroke="#444" strokeWidth="5" strokeLinecap="round" />
                    </svg>
                  </IconButton>
                </TabRow>
                <NavRow>
                  <IconButton $w={27} aria-label="back">
                    <svg width="16" height="16" viewBox="0 0 16 16" fill="#f8f8f8"><path d="M1 8L8 1V5H14V11H8V15Z" stroke="#8f8f8f" strokeWidth="1.300" /></svg>
                  </IconButton>
                  <IconButton $w={27} aria-label="forward">
                    <svg width="16" height="16" viewBox="0 0 16 16" fill="#f8f8f8"><path d="M15 8L8 1V5H2V11H8V15Z" stroke="#8f8f8f" strokeWidth="1.300" /></svg>
                  </IconButton>
                  <IconButton $w={28} aria-label="home">
                    <svg width="20" height="20" viewBox="0 0 20 20" fill="none">
                      <path d="M4 10V19H16V10L10 4Z" fill="#fff" stroke="#222" strokeWidth="1.500" />
                      <path d="M1 11L10 2L19 11" stroke="#222" strokeWidth="1.700" />
                      <path d="M4 2V7" stroke="#222" strokeWidth="1.500" />
                      <path d="M8 11H12V19H8Z" fill="#222" />
                    </svg>
                  </IconButton>
                  <Picker label="library" value="색상" w={158} h={27} />
                  <IconButton aria-label="details menu">
                    <svg width="18" height="18" viewBox="0 0 18 18"><path d="M7 0L17 9L7 18Z" fill="#111" /><path d="M1 3H10V15H1Z" fill="#dbe7f4" stroke="#222" /><path d="M2 4H9V7H2Z" fill="#3f7cc0" /><path d="M3 10H8M3 12.500H8" stroke="#666" /></svg>
                  </IconButton>
                </NavRow>
                <SwatchPane>
                  <Swatches>
                    {swatchColors.map((c) => <Swatch key={c} $color={c} aria-label={c} />)}
                  </Swatches>
                  <ScrollTrack>
                    <ScrollButton aria-label="up"><Chevron up /></ScrollButton>
                    <ScrollThumb />
                    <ScrollButton aria-label="down"><Chevron /></ScrollButton>
                  </ScrollTrack>
                </SwatchPane>
                <PaneEnd />
                <Head title="구성 요소" />
                <Head title="스타일" />
                <Head title="그림자" open />
                <ZoneRow>
                  <svg width="25" height="25" viewBox="0 0 25 25" fill="none" aria-hidden="true">
                    <path d="M9 19L20 13L24 17L13 25Z" fill="#222" />
                    <path d="M1 6L14 1L21 12L9 20Z" fill="#fff" stroke="#333" />
                    <path d="M9 20L21 12V16L11 23Z" fill="#555" />
                  </svg>
                  <Picker label="time zone" value="UTC+09:00" w={127} h={24} />
                  <Expand open />
                </ZoneRow>
                <ShadowRow $h={36} $top={6}>
                  <RowLabel htmlFor="time">시간</RowLabel>
                  <div>
                    <Range id="time" type="range" value={time} onChange={(e) => setTime(+e.target.value)}
                      $track="linear-gradient(90deg, #f5f8fd, #a9c6e0 30%, #7f9fe8 50%, #6f7fe8 70%, #20202c)" />
                    <Ticks><span>07:07</span><span>정오</span><span>17:22</span></Ticks>
                  </div>
                  <Spinner label="시간" value="01:30 오후" h={25} />
                </ShadowRow>
                <ShadowRow $h={40} $top={4}>
                  <RowLabel htmlFor="date" $drop={2}>날짜</RowLabel>
                  <div>
                    <Range id="date" type="range" value={date} $drop={2} onChange={(e) => setDate(+e.target.value)}
                      $track="linear-gradient(90deg, #fdf6e6, #f3c04a 33%, #ea2a25 68%, #f8b7bb 88%, #fdeef0)" />
                    <Months>{"JFMAMJJASOND".split("").map((m, i) => <span key={i}>{m}</span>)}</Months>
                  </div>
                  <Picker label="날짜" value="11/08" w={81} h={27} />
                </ShadowRow>
                <Rule />
                <ShadowRow $h={36} $top={11}>
                  <RowLabel htmlFor="light" $drop={4}>밝음</RowLabel>
                  <Range id="light" type="range" value={light} $drop={6} onChange={(e) => setLight(+e.target.value)} $track="linear-gradient(90deg, #222, #f8f8f8)" />
                  <Spinner label="밝음" value={light} h={27} />
                </ShadowRow>
                <ShadowRow $h={47} $top={11}>
                  <RowLabel htmlFor="dark" $drop={2}>어두움</RowLabel>
                  <Range id="dark" type="range" value={dark} $drop={6} onChange={(e) => setDark(+e.target.value)} $track="linear-gradient(90deg, #222, #f8f8f8)" />
                  <Spinner label="어두움" value={dark} h={27} />
                </ShadowRow>
                <Rule />
                <SunRow><input type="checkbox" />음영 처리를 위해 태양 사용</SunRow>
              </Sections>
              <TrayScroll>
                <ScrollButton aria-label="tray up"><Chevron up /></ScrollButton>
                <ScrollThumb />
                <ScrollButton aria-label="tray down"><Chevron /></ScrollButton>
              </TrayScroll>
            </TrayBody>
          </Tray>
        </Workspace>
        <StatusBar>
          <StatusIcons>
            <button aria-label="location">
              <svg width="18" height="18" viewBox="0 0 18 18" fill="none"><circle cx="9" cy="9" r="8" stroke="#aaa" strokeWidth="1.200" /><path d="M9 15L6 8A3.200 3.200 0 1 1 12 8Z" fill="#999" /></svg>
            </button>
            <button aria-label="credits">
              <svg width="19" height="19" viewBox="0 0 18 18" fill="none"><circle cx="9" cy="9" r="8" stroke="#111" strokeWidth="1.500" /><circle cx="9" cy="4.800" r="1.500" fill="#111" /><path d="M7 7H11V11H10V15H8V11H7Z" fill="#111" /></svg>
            </button>
            <button aria-label="account">
              <svg width="18" height="18" viewBox="0 0 18 18" fill="none"><circle cx="9" cy="9" r="8" stroke="#999" strokeWidth="1.200" /><circle cx="9" cy="6.500" r="3.200" fill="#a2a2a2" /><path d="M3 14Q4 10 9 10T15 14Q12 17 9 17T3 14Z" fill="#a2a2a2" /></svg>
            </button>
          </StatusIcons>
          <Hint>중심점을 선택하십시오. Ctrl '+' 또는 Ctrl '-'를 사용해 조각 수를 변경합니다.</Hint>
          <Measure>
            <span>내접 반경</span>
            <input type="text" defaultValue="923mm" />
          </Measure>
        </StatusBar>
      </AppWindow>
    </Screen>
  );
}
